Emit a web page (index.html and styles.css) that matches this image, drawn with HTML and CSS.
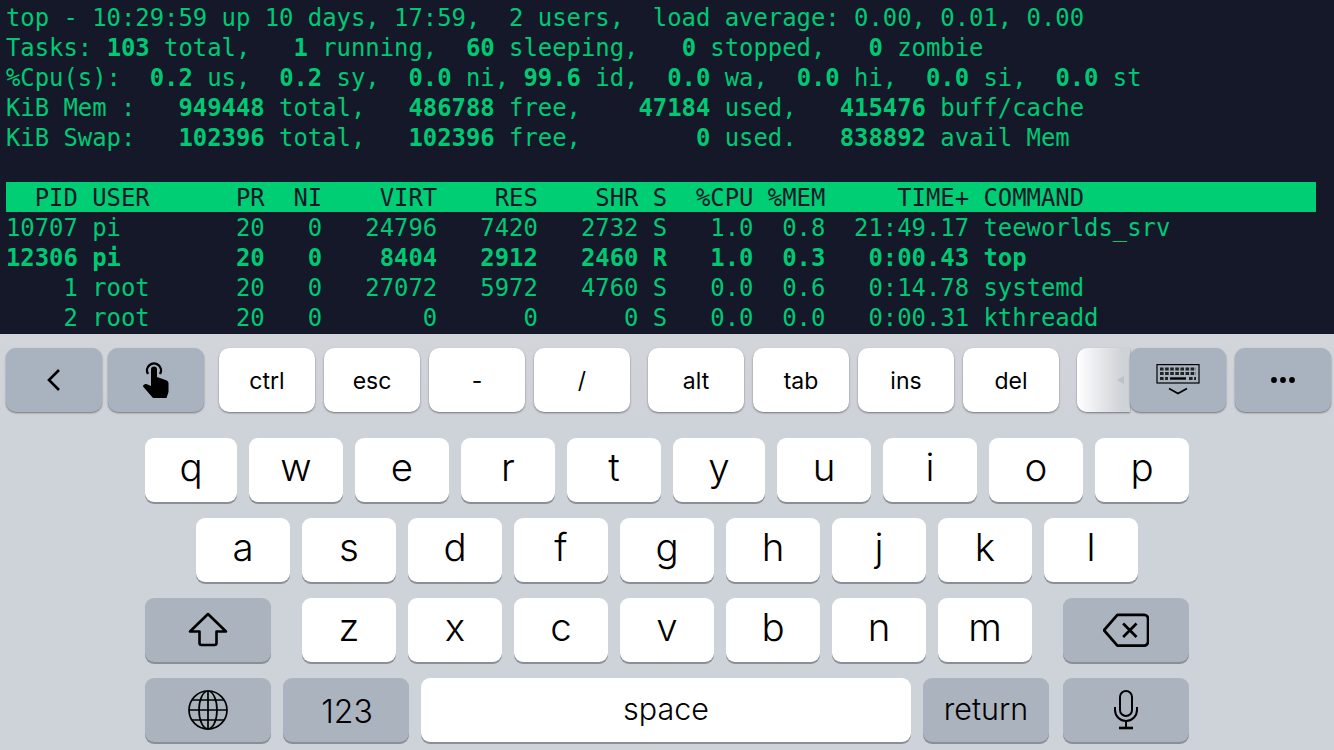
FILE: index.html
```html
<!DOCTYPE html>
<html lang="en">
<head>
    <meta charset="UTF-8">
    <title>top - terminal</title>
    <link rel="stylesheet" href="styles.css">
</head>
<body>
    <div class="terminal">
        <div class="line">top - 10:29:59 up 10 days, 17:59,  2 users,  load average: 0.00, 0.01, 0.00</div>
        <div class="line">Tasks: <b>103</b> total,   <b>1</b> running,  <b>60</b> sleeping,   <b>0</b> stopped,   <b>0</b> zombie</div>
        <div class="line">%Cpu(s):  <b>0.2</b> us,  <b>0.2</b> sy,  <b>0.0</b> ni, <b>99.6</b> id,  <b>0.0</b> wa,  <b>0.0</b> hi,  <b>0.0</b> si,  <b>0.0</b> st</div>
        <div class="line">KiB Mem :   <b>949448</b> total,   <b>486788</b> free,    <b>47184</b> used,   <b>415476</b> buff/cache</div>
        <div class="line">KiB Swap:   <b>102396</b> total,   <b>102396</b> free,        <b>0</b> used.   <b>838892</b> avail Mem</div>
        <div class="line"> </div>
        <div class="line header">  PID USER      PR  NI    VIRT    RES    SHR S  %CPU %MEM     TIME+ COMMAND</div>
        <div class="line">10707 pi        20   0   24796   7420   2732 S   1.0  0.8  21:49.17 teeworlds_srv</div>
        <div class="line"><b>12306 pi        20   0    8404   2912   2460 R   1.0  0.3   0:00.43 top</b></div>
        <div class="line">    1 root      20   0   27072   5972   4760 S   0.0  0.6   0:14.78 systemd</div>
        <div class="line">    2 root      20   0       0      0      0 S   0.0  0.0   0:00.31 kthreadd</div>
    </div>

    <div class="accessory">
        <div class="akey dark">
            <svg width="16" height="24" viewBox="0 0 16 24"><path d="M13 2 3 12l10 10" fill="none" stroke="#000" stroke-width="2.6"/></svg>
        </div>
        <div class="akey dark touch">
            <svg width="26" height="36" viewBox="0 0 26 36">
                <path d="M5 12a7 7 0 1 1 12 0" fill="none" stroke="#000" stroke-width="2.4"/>
                <path d="M8 7.500a3 3 0 0 1 6 0V15l8.500 3c1.800.6 3 1.700 3 3.500V30l-2 6H10L0 24.500c0-1.600 2-3 4-2.200l4 1.700z" fill="#000"/>
            </svg>
        </div>
        <div class="akey light first-group">ctrl</div>
        <div class="akey light">esc</div>
        <div class="akey light">-</div>
        <div class="akey light">/</div>
        <div class="akey light next-group">alt</div>
        <div class="akey light">tab</div>
        <div class="akey light">ins</div>
        <div class="akey light">del</div>
        <div class="akey fade"><span class="fade-arrow"></span></div>
        <div class="akey dark hide-key">
            <svg width="44" height="32" viewBox="0 0 44 32">
                <rect x="1" y="0.600" width="42" height="18.400" fill="none" stroke="#000" stroke-width="1.200"/>
                <path d="M4 5h36M4 9.500h36" stroke="#222" stroke-width="2.800" stroke-dasharray="3.600 1.500" fill="none"/>
                <path d="M4 14.500h8M33 14.500h7" stroke="#222" stroke-width="2.800" stroke-dasharray="3.600 1.500" fill="none"/>
                <path d="M14 14.500h16" stroke="#000" stroke-width="2.400"/>
                <path d="M13 24.500l9 5 9-5" fill="none" stroke="#000" stroke-width="1.700"/>
            </svg>
        </div>
        <div class="akey dark">
            <svg width="24" height="8" viewBox="0 0 24 8"><circle cx="3" cy="4" r="2.900"/><circle cx="12" cy="4" r="2.900"/><circle cx="21" cy="4" r="2.900"/></svg>
        </div>
    </div>

    <div class="keyboard">
        <div class="row">
            <div class="key letter narrow">q</div>
            <div class="key letter">w</div>
            <div class="key letter">e</div>
            <div class="key letter">r</div>
            <div class="key letter">t</div>
            <div class="key letter narrow">y</div>
            <div class="key letter">u</div>
            <div class="key letter">i</div>
            <div class="key letter">o</div>
            <div class="key letter">p</div>
        </div>
        <div class="row">
            <div class="key letter">a</div>
            <div class="key letter">s</div>
            <div class="key letter">d</div>
            <div class="key letter">f</div>
            <div class="key letter">g</div>
            <div class="key letter">h</div>
            <div class="key letter">j</div>
            <div class="key letter">k</div>
            <div class="key letter">l</div>
        </div>
        <div class="row spread">
            <div class="key grey wide">
                <svg width="40" height="36" viewBox="0 0 40 36"><path d="M20 2 2 19.500h9.500V31a2 2 0 0 0 2 2h13a2 2 0 0 0 2-2V19.500H38z" fill="none" stroke="#000" stroke-width="2.600" stroke-linejoin="round"/></svg>
            </div>
            <div class="letters">
                <div class="key letter">z</div>
                <div class="key letter">x</div>
                <div class="key letter">c</div>
                <div class="key letter">v</div>
                <div class="key letter">b</div>
                <div class="key letter">n</div>
                <div class="key letter">m</div>
            </div>
            <div class="key grey wide">
                <svg width="46" height="34.500" viewBox="0 0 48 36">
                    <path d="M15 2h28a4 4 0 0 1 4 4v24a4 4 0 0 1-4 4H15L1 18z" fill="none" stroke="#000" stroke-width="2.800" stroke-linejoin="round"/>
                    <path d="M21 11l14 14M35 11 21 25" stroke="#000" stroke-width="2.800"/>
                </svg>
            </div>
        </div>
        <div class="row">
            <div class="key grey wide">
                <svg width="40" height="40" viewBox="0 0 40 40" fill="none" stroke="#000" stroke-width="1.700">
                    <circle cx="20" cy="20" r="19"/>
                    <ellipse cx="20" cy="20" rx="9" ry="19"/>
                    <path d="M20 1v38M1 20h38M4 10h32M4 30h32"/>
                </svg>
            </div>
            <div class="key grey wide label digits">123</div>
            <div class="key space label">space</div>
            <div class="key grey wide label">return</div>
            <div class="key grey wide mic">
                <svg width="24" height="40" viewBox="0 0 24 40" fill="none" stroke="#000" stroke-width="2">
                    <rect x="6" y="1" width="12" height="25" rx="6"/>
                    <path d="M1 17v3a11 11 0 0 0 22 0v-3M12 31v6"/>
                    <path d="M5 38h14" stroke-width="2.600"/>
                </svg>
            </div>
        </div>
    </div>
</body>
</html>
```

FILE: styles.css
```css
html, body {
    margin: 0;
    padding: 0;
}
body {
    width: 1334px;
    height: 750px;
    overflow: hidden;
    background: #ced2d9;
}
svg {
    display: block;
}

.terminal {
    height: 334px;
    box-sizing: border-box;
    padding: 2px 0 0 6px;
    overflow: hidden;
    background: #141829;
    color: #00c974;
    font-family: "DejaVu Sans Mono", monospace;
    font-size: 23.88px;
}
.line {
    height: 30px;
    width: 1310px;
    line-height: 32px;
    white-space: pre;
}
.header {
    background: #00ce74;
    color: #141829;
}

.accessory {
    display: flex;
    gap: 9px;
    height: 91px;
    box-sizing: border-box;
    padding: 14px 3px 0 6px;
    background: linear-gradient(#d2d5da, #ced2d9);
}
.akey {
    display: flex;
    align-items: center;
    justify-content: center;
    flex: none;
    width: 96px;
    height: 64px;
    border-radius: 10px;
    box-shadow: 0 1px 2px rgba(0, 0, 0, 0.45);
    color: #000;
    font-family: Inter, "Liberation Sans", sans-serif;
    font-size: 23px;
}
.akey.dark {
    background: #a8b3bf;
}
.akey.light {
    box-sizing: border-box;
    padding-top: 2px;
    background: #fff;
}
.akey.touch {
    margin-left: -3px;
}
.first-group {
    margin-left: 6px;
}
.next-group {
    margin-left: 9px;
}
.akey.fade {
    justify-content: flex-end;
    width: 53px;
    margin-left: 9px;
    border-radius: 10px 0 0 10px;
    background: linear-gradient(to right, #fff, #cfd2d7 85%);
}
.akey.hide-key {
    margin-left: -9px;
}
.fade-arrow {
    width: 0;
    height: 0;
    margin-right: 6px;
    border-top: 4px solid transparent;
    border-bottom: 4px solid transparent;
    border-right: 7px solid #bcc1c8;
}

.keyboard {
    display: flex;
    flex-direction: column;
    gap: 16px;
    padding: 13px 145px 0;
}
.row {
    display: flex;
    justify-content: center;
    gap: 12px;
}
.row.spread {
    justify-content: space-between;
}
.letters {
    display: flex;
    gap: 12px;
}
.key {
    display: flex;
    align-items: center;
    justify-content: center;
    flex: none;
    height: 64px;
    border-radius: 9px;
    box-shadow: 0 2px 0 #8b8e94;
    color: #000;
    background: #fff;
    font-family: Inter, "Liberation Sans", sans-serif;
}
.letter {
    width: 94px;
    font-size: 38.5px;
    font-weight: 300;
    padding-bottom: 7px;
    box-sizing: border-box;
}
.letter.narrow {
    width: 92px;
}
.grey {
    background: #abb3bf;
}
.wide {
    width: 126px;
}
.label {
    box-sizing: border-box;
    padding-bottom: 4px;
    font-size: 30.5px;
    font-weight: 300;
}
.label.digits {
    padding: 2px 0 0 2px;
    font-size: 32px;
}
.space {
    width: 490px;
}
.mic {
    margin-left: 2px;
}
```
